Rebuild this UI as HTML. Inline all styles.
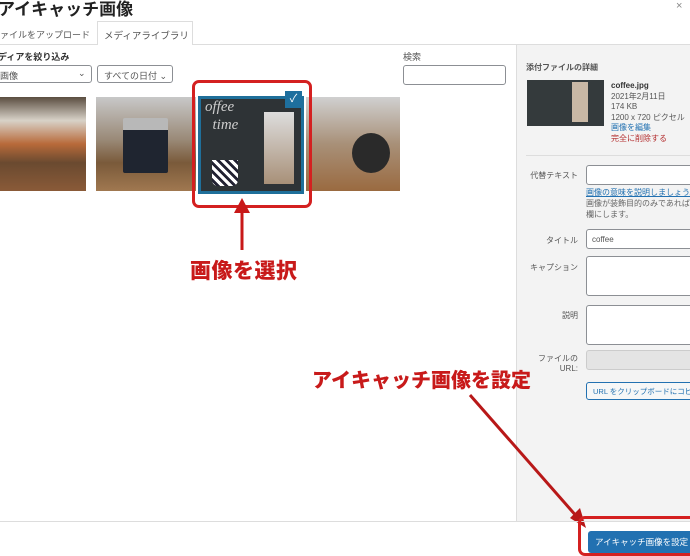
<!DOCTYPE html>
<html><head><meta charset="utf-8"><style>
*{box-sizing:border-box;margin:0;padding:0}
body{width:690px;height:549px;overflow:hidden;background:#fff;font-family:"Liberation Sans","Noto Sans CJK JP",sans-serif;position:relative;color:#333}
.a{position:absolute}
.t{font-size:9px;color:#555}
.in{position:absolute;background:#fff;border:1px solid #8c8f94;border-radius:3px}
.red{color:#c81a1a;font-weight:900}
</style></head><body>
<div class="a" style="left:-2px;top:-5px;font-size:17px;font-weight:bold;color:#222">アイキャッチ画像</div>
<div class="a" style="left:676px;top:0;font-size:11px;color:#888">×</div>
<div class="a" style="left:0;top:44px;width:690px;height:1px;background:#ddd"></div>
<div class="a t" style="left:-9px;top:28px;font-size:9px;white-space:nowrap">ファイルをアップロード</div>
<div class="a" style="left:97px;top:21px;width:96px;height:24px;border:1px solid #ddd;border-bottom:none;background:#fff"></div>
<div class="a t" style="left:104px;top:28px;font-size:9.5px;white-space:nowrap">メディアライブラリ</div>
<div class="a" style="left:-2px;top:50px;font-size:9px;font-weight:bold;color:#333">ディアを絞り込み</div>
<div class="in" style="left:-4px;top:65px;width:96px;height:18px"></div>
<div class="a t" style="left:0;top:69px">画像</div><div class="a t" style="left:78px;top:68px">⌄</div>
<div class="in" style="left:97px;top:65px;width:76px;height:18px"></div>
<div class="a t" style="left:104px;top:69px">すべての日付 ⌄</div>
<div class="a t" style="left:403px;top:50px">検索</div>
<div class="in" style="left:403px;top:65px;width:103px;height:20px"></div>
<div class="a" style="left:516px;top:45px;width:174px;height:477px;background:#f3f3f3;border-left:1px solid #ddd"></div>
<div class="a" style="left:0;top:97px;width:86px;height:94px;background:linear-gradient(180deg,#5a4d40 0,#d8d2c8 25%,#b86a3a 50%,#6a4a30 70%,#8a5a38 100%)"></div>
<div class="a" style="left:96px;top:97px;width:100px;height:94px;background:linear-gradient(180deg,#c8c8c8 0,#9a8a78 45%,#7a5a3a 70%,#a07850 100%)"></div>
<div class="a" style="left:123px;top:118px;width:45px;height:55px;background:#1f2530;border-radius:2px;border-top:12px solid #b8b8b8"></div>
<div class="a" style="left:306px;top:97px;width:94px;height:94px;background:linear-gradient(180deg,#d0d0d0 0,#a89078 50%,#9a6a40 100%)"></div>
<div class="a" style="left:352px;top:133px;width:38px;height:40px;border-radius:50%;background:#2a2a2a"></div>
<div class="a" style="left:198px;top:96px;width:106px;height:98px;background:#2e3336;border:3px solid #1f6f9a"></div>
<div class="a" style="left:205px;top:98px;font-family:'Liberation Serif',serif;font-style:italic;color:#ccc;font-size:15px;line-height:18px">offee<br>&nbsp;&nbsp;time</div>
<div class="a" style="left:264px;top:112px;width:30px;height:72px;background:linear-gradient(#ddd,#a89078)"></div>
<div class="a" style="left:212px;top:160px;width:26px;height:26px;background:repeating-linear-gradient(45deg,#fff 0 3px,#223 3px 6px);border-radius:0 0 6px 6px"></div>
<div class="a" style="left:285px;top:91px;width:17px;height:17px;background:#1e6f9e;color:#fff;font-size:11px;text-align:center;line-height:17px">✓</div>
<div class="a" style="left:192px;top:80px;width:120px;height:128px;border:3px solid #d42020;border-radius:7px"></div>
<svg class="a" style="left:0;top:0" width="690" height="549">
<line x1="242" y1="250" x2="242" y2="210" stroke="#c81818" stroke-width="3"/>
<polygon points="242,198 234,213 250,213" fill="#c81818"/>
<line x1="470" y1="395" x2="578" y2="518" stroke="#b81818" stroke-width="3"/>
<polygon points="586,528 570,518 580,508" fill="#b81818"/>
</svg>
<div class="a red" style="left:190px;top:255px;font-size:21px;letter-spacing:0.5px">画像を選択</div>
<div class="a red" style="left:312px;top:364px;font-size:20px">アイキャッチ画像を設定</div>
<div class="a" style="left:526px;top:62px;font-size:8px;font-weight:bold;color:#555">添付ファイルの詳細</div>
<div class="a" style="left:527px;top:80px;width:77px;height:46px;background:#343a3c"></div>
<div class="a" style="left:572px;top:82px;width:16px;height:40px;background:#c9b8a5"></div>
<div class="a" style="left:611px;top:81px;font-size:8px;line-height:10.5px;color:#555"><b style="color:#333">coffee.jpg</b><br>2021年2月11日<br>174 KB<br>1200 x 720 ピクセル<br><span style="color:#2271b1">画像を編集</span><br><span style="color:#b32d2e">完全に削除する</span></div>
<div class="a" style="left:526px;top:155px;width:164px;height:1px;background:#ddd"></div>
<div class="a t" style="left:520px;top:170px;width:58px;text-align:right;font-size:8px">代替テキスト</div>
<div class="in" style="left:586px;top:165px;width:110px;height:20px"></div>
<div class="a" style="left:586px;top:187px;font-size:8px;line-height:11px;color:#666;white-space:nowrap"><span style="color:#2271b1;text-decoration:underline">画像の意味を説明しましょう。</span><br>画像が装飾目的のみであれば空<br>欄にします。</div>
<div class="a t" style="left:520px;top:235px;width:58px;text-align:right;font-size:8px">タイトル</div>
<div class="in" style="left:586px;top:229px;width:110px;height:20px"></div>
<div class="a t" style="left:592px;top:235px;font-size:8px">coffee</div>
<div class="a t" style="left:520px;top:262px;width:58px;text-align:right;font-size:8px">キャプション</div>
<div class="in" style="left:586px;top:256px;width:110px;height:40px"></div>
<div class="a t" style="left:520px;top:310px;width:58px;text-align:right;font-size:8px">説明</div>
<div class="in" style="left:586px;top:305px;width:110px;height:40px"></div>
<div class="a t" style="left:520px;top:354px;width:58px;text-align:right;font-size:8px;line-height:10px">ファイルの<br>URL:</div>
<div class="in" style="left:586px;top:350px;width:110px;height:20px;background:#e4e4e4;border-color:#ccc"></div>
<div class="in" style="left:586px;top:382px;width:110px;height:18px;border-color:#2271b1;background:#f6f7f7"></div>
<div class="a" style="left:593px;top:386px;font-size:7.5px;color:#2271b1;white-space:nowrap">URL をクリップボードにコピー</div>
<div class="a" style="left:0;top:521px;width:690px;height:1px;background:#ddd"></div>
<div class="a" style="left:588px;top:531px;width:110px;height:22px;background:#2271b1;border-radius:3px"></div>
<div class="a" style="left:595px;top:536px;font-size:8.5px;color:#fff;white-space:nowrap">アイキャッチ画像を設定</div>
<div class="a" style="left:578px;top:516px;width:120px;height:40px;border:3px solid #d42020;border-radius:7px"></div>
</body></html>
